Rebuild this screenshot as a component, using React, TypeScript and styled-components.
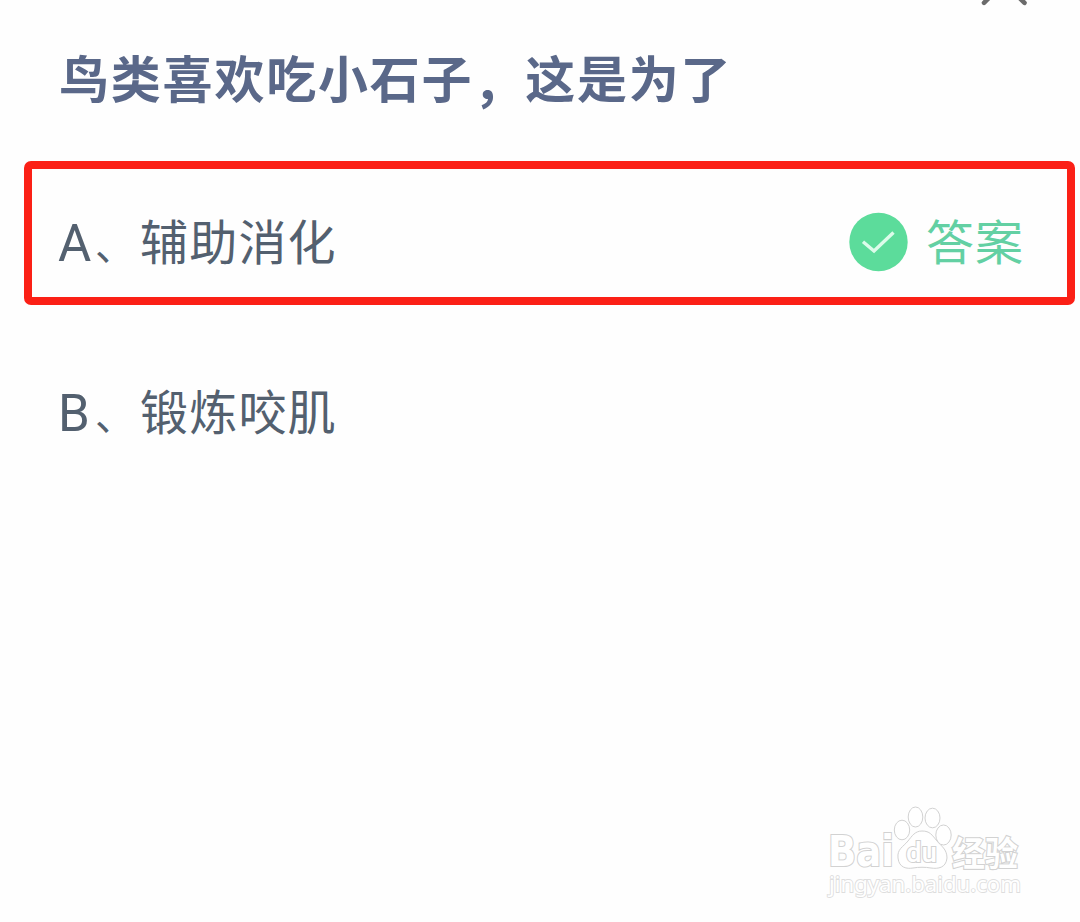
import React, { FC } from "react";
import styled, { createGlobalStyle } from "styled-components";

type OptionProps = {
  label: string;
  text: string;
  correct?: boolean;
};

const Option: FC<OptionProps> = (props): JSX.Element => {
  const { label, text, correct } = props;
  return (
    <OptionRow $correct={correct}>
      <Letter>{label}</Letter>
      <Mark>、</Mark>
      <OptionText>{text}</OptionText>
      {correct && (
        <Answer>
          <CheckIcon viewBox="0 0 60 60">
            <circle cx="30.5" cy="30" r="29.2" fill="#5cdc9b" />
            <path
              d="M15 29.8L26 39L45.5 20.5"
              fill="none"
              stroke="#dcfcea"
              strokeWidth="3.4"
            />
          </CheckIcon>
          <AnswerText>答案</AnswerText>
        </Answer>
      )}
    </OptionRow>
  );
};

const Watermark: FC = (): JSX.Element => (
  <WatermarkSvg viewBox="0 0 230 115">
    <g fill="#fff" stroke="#d2d2d2" strokeWidth="1">
      <LogoText x="18" y="71" textLength="66" lengthAdjust="spacingAndGlyphs">
        Bai
      </LogoText>
      <ellipse cx="92" cy="35" rx="7.7" ry="9.8" />
      <ellipse cx="105.5" cy="22" rx="7.3" ry="10" />
      <ellipse cx="122.5" cy="23" rx="7.5" ry="9.8" />
      <ellipse cx="133.5" cy="40" rx="7.7" ry="10" />
      <path d="M112 36C105 36 102 41 98 46C93 52 87 54 88 63C89 73 97 74 103 73C109 72 115 72 121 73C128 74 136 73 137 63C137 54 131 51 127 46C122 40 120 36 112 36Z" />
      <PawText x="96" y="67" textLength="31" lengthAdjust="spacingAndGlyphs">
        du
      </PawText>
      <NameText x="142" y="71" textLength="66" lengthAdjust="spacingAndGlyphs">
        经验
      </NameText>
      <UrlText x="19" y="97" textLength="192" lengthAdjust="spacingAndGlyphs">
        jingyan.baidu.com
      </UrlText>
    </g>
  </WatermarkSvg>
);

const App: FC = (): JSX.Element => {
  return (
    <Wrapper>
      <GlobalStyle />
      <TopBar>
        <CloseIcon viewBox="0 0 48 6">
          <path
            d="M4 2.8L24 -17.2M44.5 2.8L24 -17.2"
            stroke="#6b6b6b"
            strokeWidth="4.6"
            strokeLinecap="round"
          />
        </CloseIcon>
      </TopBar>
      <Title>
        鸟类喜欢吃小石子<Comma>，</Comma>这是为了
      </Title>
      <OptionList>
        <Option label="A" text="辅助消化" correct />
        <Option label="B" text="锻炼咬肌" />
      </OptionList>
      <Watermark />
    </Wrapper>
  );
};

export default App;

const GlobalStyle = createGlobalStyle`
  body {
    margin: 0;
    background-color: #fefefe;
    font-family: "Noto Sans CJK SC", sans-serif;
  }
`;
const Wrapper = styled.main`
  position: relative;
  width: 1080px;
  height: 922px;
  overflow: hidden;
`;
const TopBar = styled.header`
  display: flex;
  justify-content: flex-end;
  height: 40px;
  padding-right: 52px;
`;
const CloseIcon = styled.svg`
  width: 48px;
  height: 6px;
`;
const Title = styled.h1`
  margin: 0;
  padding-left: 59px;
  height: 72px;
  line-height: 72px;
  font-size: 50px;
  font-weight: 700;
  letter-spacing: 1.8px;
  color: #5a6889;
`;
const Comma = styled.span`
  line-height: 1;
  vertical-align: -4px;
`;
const OptionList = styled.ul`
  margin: 49px 0 0;
  padding: 0 5px 0 24px;
  list-style: none;
`;
const OptionRow = styled.li<{ $correct?: boolean }>`
  display: flex;
  align-items: center;
  box-sizing: border-box;
  height: 144px;
  margin-bottom: 26px;
  padding: 0 43px 0 26px;
  border: 8px solid ${({ $correct }) => ($correct ? "#fb2016" : "transparent")};
  border-radius: 7px;
  line-height: 72px;
  font-size: 48px;
  color: #53606f;
`;
const Letter = styled.span`
  width: 37px;
  padding-top: 21px;
  font-family: Roboto, sans-serif;
  font-size: 51px;
`;
const Mark = styled.span`
  width: 45px;
  padding-top: 19px;
  font-size: 40px;
`;
const OptionText = styled.span`
  padding-top: 11px;
  letter-spacing: 1.2px;
`;
const Answer = styled.div`
  display: flex;
  align-items: center;
  margin-left: auto;
`;
const CheckIcon = styled.svg`
  width: 60px;
  height: 60px;
  margin-top: 18px;
`;
const AnswerText = styled.span`
  margin-left: 18px;
  padding-top: 11px;
  letter-spacing: 1px;
  color: #63d0a3;
`;
const WatermarkSvg = styled.svg`
  position: absolute;
  right: 40px;
  bottom: 12px;
  width: 230px;
  height: 115px;
`;
const LogoText = styled.text`
  font: 700 42px "DejaVu Sans", sans-serif;
  stroke-width: 2.2px;
  paint-order: stroke;
`;
const PawText = styled.text`
  font: 500 27px Roboto, sans-serif;
  stroke-width: 2px;
  paint-order: stroke;
`;
const NameText = styled.text`
  font: 700 34px "Noto Sans CJK SC", sans-serif;
  stroke-width: 2.2px;
  paint-order: stroke;
`;
const UrlText = styled.text`
  font: 400 22px "Noto Sans", sans-serif;
  stroke: #dedede;
  stroke-width: 1.8px;
  paint-order: stroke;
`;
